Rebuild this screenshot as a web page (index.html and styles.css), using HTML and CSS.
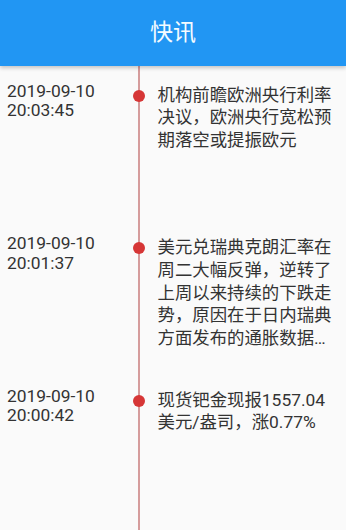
FILE: index.html
```html
<!DOCTYPE html>
<html lang="zh-CN">
<head>
<meta charset="utf-8">
<title>快讯</title>
<link rel="stylesheet" href="styles.css">
</head>
<body>
<header class="appbar"><h1 class="title">快讯</h1></header>
<main class="list">
  <article class="item">
    <div class="time">2019-09-10<br>20:03:45</div>
    <div class="axis"><span class="dot"></span></div>
    <p class="text">机构前瞻欧洲央行利率决议，欧洲央行宽松预期落空或提振欧元</p>
  </article>
  <article class="item">
    <div class="time">2019-09-10<br>20:01:37</div>
    <div class="axis"><span class="dot"></span></div>
    <p class="text">美元兑瑞典克朗汇率在周二大幅反弹，逆转了上周以来持续的下跌走势，原因在于日内瑞典方面发布的通胀数据…</p>
  </article>
  <article class="item">
    <div class="time">2019-09-10<br>20:00:42</div>
    <div class="axis"><span class="dot"></span></div>
    <p class="text">现货钯金现报1557.04美元/盎司，涨0.77%</p>
  </article>
</main>
</body>
</html>
```
FILE: styles.css
```css
html, body {
  margin: 0;
  padding: 0;
}
body {
  background: #fafafa;
  font-family: Roboto, "Noto Sans CJK SC", sans-serif;
  color: #333;
  overflow: hidden;
}
.appbar {
  height: 66px;
  background: #2196f3;
  display: flex;
  align-items: center;
  justify-content: center;
  box-shadow: 0 2px 4px rgba(0, 0, 0, 0.22);
  position: relative;
  z-index: 1;
}
.title {
  margin: 0;
  font-size: 23px;
  font-weight: 400;
  color: #f4fbff;
  line-height: 1;
  padding-bottom: 1px;
}
.list {
  min-height: calc(100vh - 66px);
  background: linear-gradient(#d59c9c, #d59c9c) 137.5px 0 / 2px 100% no-repeat;
}
.item {
  height: 152.5px;
  display: grid;
  grid-template-columns: 131px 15px 1fr;
  align-items: start;
}
.time {
  padding: 15.8px 0 0 7px;
  font-size: 17.4px;
  line-height: 19.5px;
}
.axis {
  display: flex;
  justify-content: center;
  padding-top: 23.5px;
}
.dot {
  width: 12px;
  height: 12px;
  border-radius: 50%;
  background: #d63636;
}
.text {
  margin: 0;
  padding: 17.6px 8px 0 11.5px;
  font-family: Roboto, "Noto Sans CJK TC", sans-serif;
  font-size: 17.4px;
  line-height: 22.8px;
}
```
